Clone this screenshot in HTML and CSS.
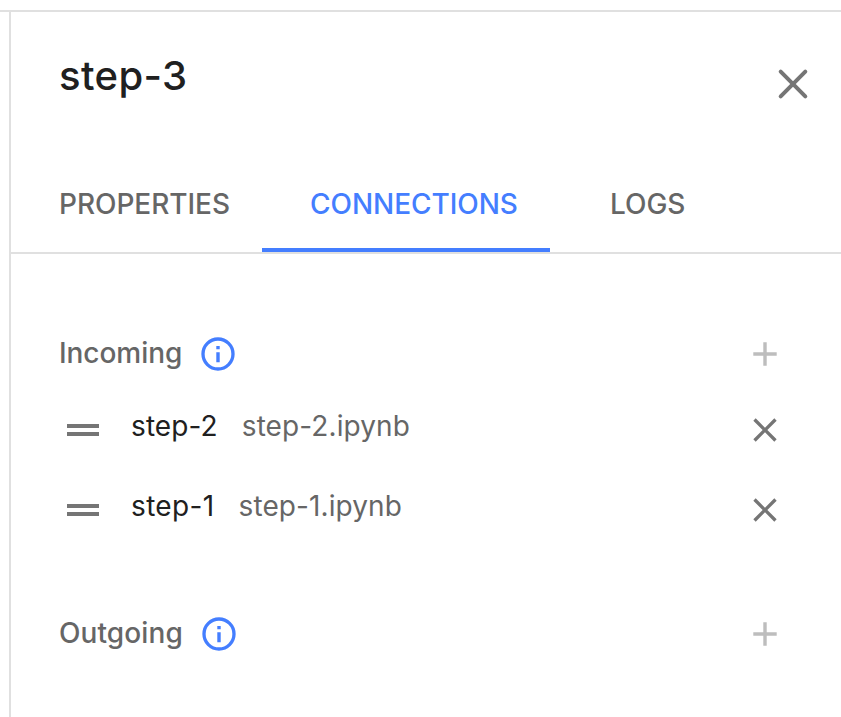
FILE: index.html
```html
<!DOCTYPE html>
<html lang="en">
<head>
<meta charset="utf-8">
<title>step-3</title>
<link rel="stylesheet" href="styles.css">
</head>
<body>
<aside class="panel">
  <header class="header">
    <h1 class="title">step-3</h1>
    <svg class="close" viewBox="0 0 48 48"><path d="M11.7 11.7l24.6 24.6M36.3 11.7L11.7 36.3"/></svg>
  </header>
  <nav class="tabs">
    <a class="tab properties">PROPERTIES</a>
    <a class="tab connections active">CONNECTIONS</a>
    <a class="tab logs">LOGS</a>
  </nav>
  <main class="content">
    <div class="row heading">
      <span class="label incoming">Incoming</span>
      <svg class="info" viewBox="0 0 40 40"><circle cx="20" cy="20" r="15"/><path d="M18.3 12h3.4v3.3h-3.4zM18.3 18.3h3.4v10h-3.4z"/></svg>
      <svg class="action add" viewBox="0 0 40 40"><path d="M31.7 21.7h-10v10h-3.4v-10h-10v-3.4h10v-10h3.4v10h10z"/></svg>
    </div>
    <div class="row item">
      <svg class="drag" viewBox="0 0 40 40"><path d="M4 14h32v4H4zM4 22h32v4H4z"/></svg>
      <span class="name">step-2</span>
      <span class="file">step-2.ipynb</span>
      <svg class="action" viewBox="0 0 48 48"><path d="M38 12.83 35.17 10 24 21.17 12.83 10 10 12.83 21.17 24 10 35.17 12.83 38 24 26.83 35.17 38 38 35.17 26.83 24z"/></svg>
    </div>
    <div class="row item wide">
      <svg class="drag" viewBox="0 0 40 40"><path d="M4 14h32v4H4zM4 22h32v4H4z"/></svg>
      <span class="name">step-1</span>
      <span class="file">step-1.ipynb</span>
      <svg class="action" viewBox="0 0 48 48"><path d="M38 12.83 35.17 10 24 21.17 12.83 10 10 12.83 21.17 24 10 35.17 12.83 38 24 26.83 35.17 38 38 35.17 26.83 24z"/></svg>
    </div>
    <div class="row heading outgoing-row">
      <span class="label outgoing">Outgoing</span>
      <svg class="info" viewBox="0 0 40 40"><circle cx="20" cy="20" r="15"/><path d="M18.3 12h3.4v3.3h-3.4zM18.3 18.3h3.4v10h-3.4z"/></svg>
      <svg class="action add" viewBox="0 0 40 40"><path d="M31.7 21.7h-10v10h-3.4v-10h-10v-3.4h10v-10h3.4v10h10z"/></svg>
    </div>
  </main>
</aside>
</body>
</html>
```
FILE: styles.css
```css
* { box-sizing: border-box; }
body {
  margin: 0;
  padding-top: 10px;
  height: 717px;
  overflow: hidden;
  background: #fff;
  font-family: Inter, sans-serif;
  color: #202020;
}
body::before { content: ""; display: block; height: 2px; background: #e0e0e0; }
.panel { height: 705px; margin-left: 9px; border-left: 2px solid #e0e0e0; }
.header { height: 144px; padding: 40px 24px 0 48px; display: flex; justify-content: space-between; }
.title { margin: 0; font-size: 40px; line-height: 48px; font-weight: 500; letter-spacing: .4px; white-space: nowrap; }
.close { width: 48px; height: 48px; margin-top: 8px; fill: none; stroke: #757575; stroke-width: 4; stroke-linecap: round; }
.tabs { height: 98px; display: flex; border-bottom: 2px solid #e0e0e0; }
.tab { height: 96px; font-size: 28px; line-height: 96px; font-weight: 500; letter-spacing: -.05px; color: #666; white-space: nowrap; border-bottom: 0 solid #447eff; }
.properties { width: 251px; padding-left: 48px; }
.connections { width: 288px; padding-left: 48px; }
.logs { padding-left: 60px; }
.active { color: #447eff; border-bottom-width: 4px; }
.content { padding: 64px 56px 0 48px; }
.row { height: 80px; display: flex; align-items: center; white-space: nowrap; font-size: 28px; }
.heading { height: 72px; }
.label { padding-bottom: 2px; color: #666; font-weight: 500; letter-spacing: -.05px; }
.incoming { width: 123px; }
.outgoing { width: 124px; letter-spacing: .1px; }
.info { width: 40px; height: 40px; margin-left: 16px; fill: #447eff; }
.info circle { fill: none; stroke: #447eff; stroke-width: 3.33; }
.action { width: 40px; height: 40px; margin-left: auto; fill: #757575; }
.add { fill: #bdbdbd; }
.drag { width: 40px; height: 40px; margin: 0 28px 0 4px; fill: #757575; }
.name, .file { padding-bottom: 8px; letter-spacing: .1px; }
.wide .name { letter-spacing: .35px; }
.wide .file { letter-spacing: .1px; }
.file { color: #666; margin-left: 24px; }
.outgoing-row { margin-top: 48px; }
```
